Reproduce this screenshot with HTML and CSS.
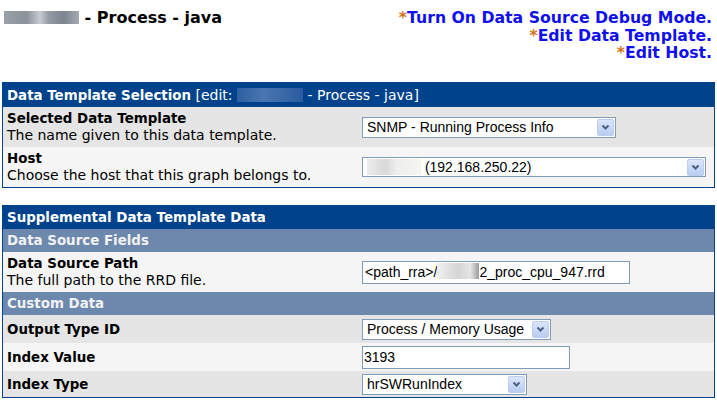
FILE: index.html
```html
<!DOCTYPE html>
<html>
<head>
<meta charset="utf-8">
<link rel="stylesheet" href="styles.css">
</head>
<body>
<div class="page">
  <div class="top">
    <div class="title"><span class="blur blur-title"></span> - Process - java</div>
    <div class="links">
      <div><span class="mark">*</span><a href="#">Turn On Data Source Debug Mode.</a></div>
      <div><span class="mark">*</span><a href="#">Edit Data Template.</a></div>
      <div><span class="mark">*</span><a href="#">Edit Host.</a></div>
    </div>
  </div>

  <table class="box box-first">
    <colgroup><col class="c1"><col></colgroup>
    <tr class="hdr h24"><td colspan="2"><b>Data Template Selection</b> [edit: <span class="blur blur-hdr"></span> - Process - java]</td></tr>
    <tr class="dark h40">
      <td class="lbl"><b>Selected Data Template</b><br>The name given to this data template.</td>
      <td class="fld"><div class="sel w254 hh21"><span class="txt">SNMP - Running Process Info</span><span class="btn"><svg width="9" height="7" viewBox="0 0 9 7"><polyline points="1.5,1.5 4.5,4.5 7.5,1.5" fill="none" stroke="#4d6185" stroke-width="2"/></svg></span></div></td>
    </tr>
    <tr class="light h40">
      <td class="lbl"><b>Host</b><br>Choose the host that this graph belongs to.</td>
      <td class="fld"><div class="sel w344 hh20"><span class="txt"><span class="blur blur-host"></span> (192.168.250.22)</span><span class="btn"><svg width="9" height="7" viewBox="0 0 9 7"><polyline points="1.5,1.5 4.5,4.5 7.5,1.5" fill="none" stroke="#4d6185" stroke-width="2"/></svg></span></div></td>
    </tr>
  </table>

  <table class="box box-second">
    <colgroup><col class="c1"><col></colgroup>
    <tr class="hdr h23"><td colspan="2"><b>Supplemental Data Template Data</b></td></tr>
    <tr class="sub h23"><td colspan="2">Data Source Fields</td></tr>
    <tr class="light h40">
      <td class="lbl"><b>Data Source Path</b><br>The full path to the RRD file.</td>
      <td class="fld"><div class="inp w268">&lt;path_rra&gt;/<span class="blur blur-path"></span>2_proc_cpu_947.rrd</div></td>
    </tr>
    <tr class="sub h23"><td colspan="2">Custom Data</td></tr>
    <tr class="dark h28">
      <td class="lbl"><b>Output Type ID</b></td>
      <td class="fld"><div class="sel w188 hh21"><span class="txt">Process / Memory Usage</span><span class="btn"><svg width="9" height="7" viewBox="0 0 9 7"><polyline points="1.5,1.5 4.5,4.5 7.5,1.5" fill="none" stroke="#4d6185" stroke-width="2"/></svg></span></div></td>
    </tr>
    <tr class="light h28">
      <td class="lbl"><b>Index Value</b></td>
      <td class="fld"><div class="inp w208 pl1">3193</div></td>
    </tr>
    <tr class="dark h26">
      <td class="lbl"><b>Index Type</b></td>
      <td class="fld"><div class="sel w165 hh21"><span class="txt">hrSWRunIndex</span><span class="btn"><svg width="9" height="7" viewBox="0 0 9 7"><polyline points="1.5,1.5 4.5,4.5 7.5,1.5" fill="none" stroke="#4d6185" stroke-width="2"/></svg></span></div></td>
    </tr>
  </table>
</div>
</body>
</html>
```

FILE: styles.css
```css
html, body {
  margin: 0;
  padding: 0;
  background: #ffffff;
}

.page {
  padding: 0 2px;
  font-family: "DejaVu Sans", Verdana, sans-serif;
  font-size: 14px;
  color: #000;
}

.page b {
  font-size: 13.4px;
}

.top {
  height: 82px;
  display: flex;
  justify-content: space-between;
  align-items: flex-start;
}

.title {
  padding: 9px 0 0 2px;
  font-size: 16px;
  font-weight: bold;
  line-height: 17.5px;
  white-space: nowrap;
}

.links {
  padding: 9px 3px 0 0;
  text-align: right;
  font-size: 15.7px;
  font-weight: bold;
  line-height: 17.5px;
}

.links a {
  color: #1010ee;
  text-decoration: none;
}

.mark {
  color: #d27420;
}

.blur {
  display: inline-block;
  vertical-align: middle;
}

.blur-title {
  width: 75px;
  height: 13px;
  margin-top: -3px;
  background: linear-gradient(90deg, #9aa0a8 0, #8c929b 30%, #c8ccd1 48%, #9399a2 60%, #7d848e 80%, #a4aab2 100%);
}

.blur-hdr {
  width: 66px;
  height: 14px;
  margin-top: -2px;
  background: linear-gradient(90deg, #2d5fa0, #4a76b2 40%, #3b69a8 70%, #2a5b9c);
}

.blur-host {
  width: 54px;
  height: 16px;
  margin-top: -2px;
  background: linear-gradient(90deg, #ececec, #d8d8d8 35%, #eeeeee 55%, #f4f4f0 100%);
}

.blur-path {
  width: 42px;
  height: 16px;
  margin-top: -2px;
  background: linear-gradient(90deg, #f0f0f0, #d5d5d5 50%, #e4e4e4 80%, #9a9a9a);
}

.box {
  width: 100%;
  table-layout: fixed;
  border-collapse: separate;
  border-spacing: 0;
  border: 1px solid #00438c;
}

.box-second {
  margin-top: 17px;
}

.c1 {
  width: 355px;
}

.box td {
  padding: 0 0 0 4px;
  line-height: 17px;
  vertical-align: middle;
  white-space: nowrap;
}

.hdr td {
  background: #00438c;
  color: #ffffff;
}

.sub td {
  background: #6d88ad;
  color: #f2f2f2;
  font-weight: bold;
  font-size: 13.4px;
}

.dark td {
  background: #e5e5e5;
}

.light td {
  background: #f5f5f5;
}

.h23 td { height: 23px; }
.h24 td { height: 24px; }
.h26 td { height: 26px; }
.h28 td { height: 28px; }
.h40 td { height: 40px; }

.sel, .inp {
  box-sizing: border-box;
  border: 1px solid #7f9db9;
  background: #ffffff;
  font-family: "Liberation Sans", Arial, sans-serif;
  font-size: 14px;
  color: #000;
  display: flex;
  align-items: center;
}

.sel {
  padding-left: 4px;
}

.sel .txt {
  flex: 1;
  white-space: nowrap;
  overflow: hidden;
}

.sel .btn {
  box-sizing: border-box;
  width: 17px;
  height: 17px;
  margin-right: 1px;
  border: 1px solid #bccdef;
  border-radius: 2px;
  background: linear-gradient(#dae6fb, #b9cdf3);
  display: flex;
  align-items: center;
  justify-content: center;
}

.hh20 { height: 20px; }
.hh21 { height: 21px; }

.inp {
  height: 23px;
  padding-left: 2px;
}

.pl1 { padding-left: 1px; }

.w165 { width: 165px; }
.w188 { width: 189px; }
.w208 { width: 208px; }
.w254 { width: 254px; }
.w268 { width: 268px; }
.w344 { width: 344px; }
```
